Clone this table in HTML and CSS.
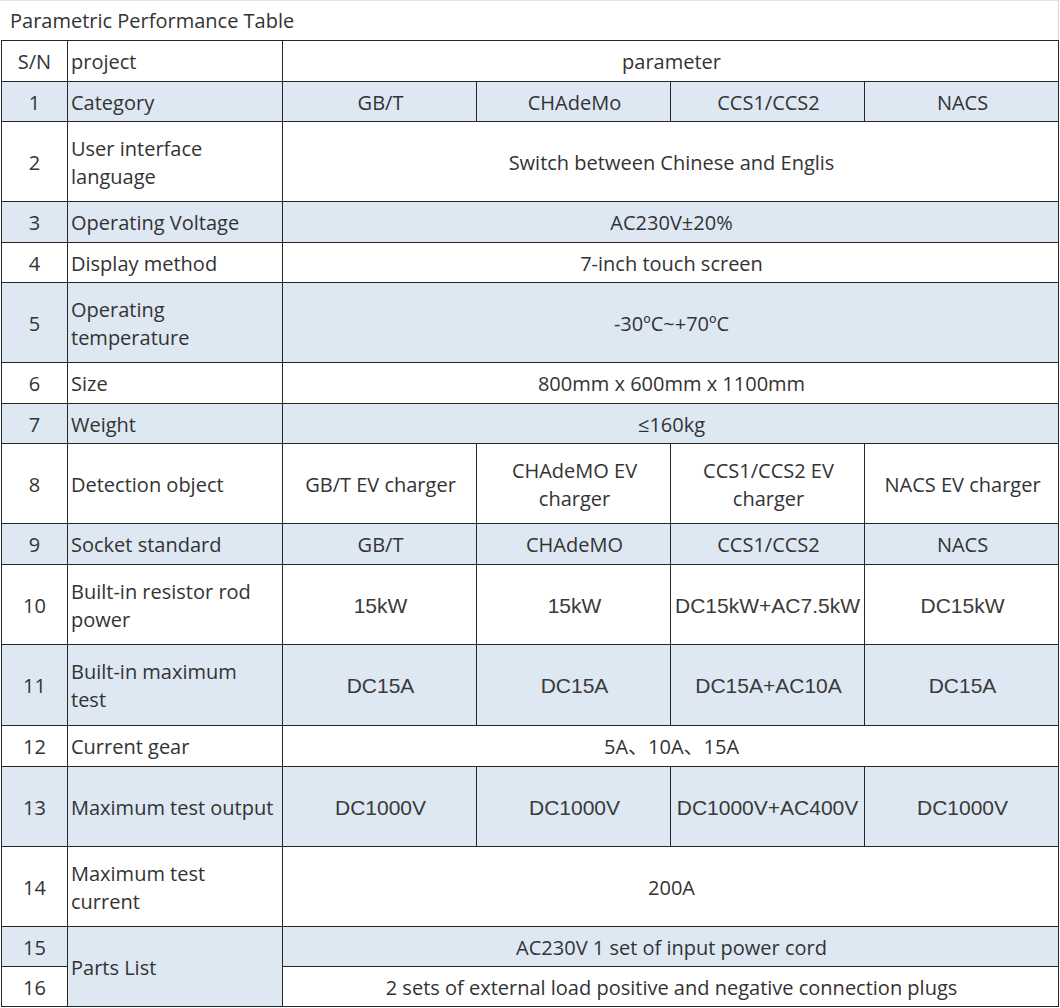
FILE: index.html
```html
<!DOCTYPE html>
<html>
<head>
<meta charset="utf-8">
<link rel="stylesheet" href="styles.css">
</head>
<body>
<div class="sheet">
  <div class="title">Parametric Performance Table</div>
  <table class="params">
    <colgroup>
      <col class="c-sn"><col class="c-proj"><col class="c-val"><col class="c-val"><col class="c-val"><col class="c-val">
    </colgroup>
    <tbody>
      <tr class="h41"><td class="sn">S/N</td><td class="proj">project</td><td colspan="4" class="val">parameter</td></tr>
      <tr class="h40 blue"><td class="sn">1</td><td class="proj">Category</td><td class="val">GB/T</td><td class="val">CHAdeMo</td><td class="val">CCS1/CCS2</td><td class="val">NACS</td></tr>
      <tr class="h80"><td class="sn">2</td><td class="proj">User interface<br>language</td><td colspan="4" class="val">Switch between Chinese and Englis</td></tr>
      <tr class="h41 blue"><td class="sn">3</td><td class="proj">Operating Voltage</td><td colspan="4" class="val">AC230V±20%</td></tr>
      <tr class="h40"><td class="sn">4</td><td class="proj">Display method</td><td colspan="4" class="val">7-inch touch screen</td></tr>
      <tr class="h80 blue"><td class="sn">5</td><td class="proj">Operating<br>temperature</td><td colspan="4" class="val">-30ºC~+70ºC</td></tr>
      <tr class="h41"><td class="sn">6</td><td class="proj">Size</td><td colspan="4" class="val">800mm x 600mm x 1100mm</td></tr>
      <tr class="h40 blue"><td class="sn">7</td><td class="proj">Weight</td><td colspan="4" class="val">≤160kg</td></tr>
      <tr class="h80"><td class="sn">8</td><td class="proj">Detection object</td><td class="val">GB/T EV charger</td><td class="val">CHAdeMO EV<br>charger</td><td class="val">CCS1/CCS2 EV<br>charger</td><td class="val">NACS EV charger</td></tr>
      <tr class="h41 blue"><td class="sn">9</td><td class="proj">Socket standard</td><td class="val">GB/T</td><td class="val">CHAdeMO</td><td class="val">CCS1/CCS2</td><td class="val">NACS</td></tr>
      <tr class="h80"><td class="sn">10</td><td class="proj">Built-in resistor rod<br>power</td><td class="val ar">15kW</td><td class="val ar">15kW</td><td class="val ar tight">DC15kW+AC7.5kW</td><td class="val ar">DC15kW</td></tr>
      <tr class="h81 blue"><td class="sn">11</td><td class="proj">Built-in maximum<br>test</td><td class="val ar">DC15A</td><td class="val ar">DC15A</td><td class="val ar">DC15A+AC10A</td><td class="val ar">DC15A</td></tr>
      <tr class="h41"><td class="sn">12</td><td class="proj">Current gear</td><td colspan="4" class="val">5A、10A、15A</td></tr>
      <tr class="h80 blue"><td class="sn">13</td><td class="proj">Maximum test output</td><td class="val ar">DC1000V</td><td class="val ar">DC1000V</td><td class="val ar tight">DC1000V+AC400V</td><td class="val ar">DC1000V</td></tr>
      <tr class="h80"><td class="sn">14</td><td class="proj">Maximum test<br>current</td><td colspan="4" class="val">200A</td></tr>
      <tr class="h40 blue"><td class="sn">15</td><td rowspan="2" class="proj blue-cell">Parts List</td><td colspan="4" class="val">AC230V 1 set of input power cord</td></tr>
      <tr class="h40"><td class="sn">16</td><td colspan="4" class="val">2 sets of external load positive and negative connection plugs</td></tr>
    </tbody>
  </table>
</div>
</body>
</html>
```

FILE: styles.css
```css
html, body {
  margin: 0;
  padding: 0;
  background: #ffffff;
}

.sheet {
  width: 1060px;
  font-family: "Open Sans", "Noto Sans CJK SC", sans-serif;
  color: #333333;
}

.title {
  box-sizing: border-box;
  height: 40px;
  width: 1059px;
  padding-left: 10px;
  border-top: 1px solid #e4e4e4;
  border-right: 1px solid #d8d8d8;
  font-size: 20px;
  line-height: 40px;
}

.params {
  border-collapse: collapse;
  table-layout: fixed;
  width: 1058px;
  margin-left: 1px;
  font-size: 20px;
}

.c-sn { width: 66px; }
.c-proj { width: 215px; }
.c-val { width: 194px; }

.params td {
  border: 1px solid #262626;
  padding: 2px 1px 0 3px;
  line-height: 28px;
  vertical-align: middle;
  white-space: nowrap;
  overflow: hidden;
}

.params td.sn { text-align: center; padding: 2px 0 0 0; }
.params td.proj { text-align: left; }
.params td.val { text-align: center; }
.params td.ar {
  font-family: "Liberation Sans", Arial, sans-serif;
  font-size: 21px;
  color: #3a3a3a;
}
.params td.tight { padding: 2px 0 0 0; }

.h40 { height: 40px; }
.h41 { height: 41px; }
.h80 { height: 80px; }
.h81 { height: 81px; }

.blue td { background: #dde8f3; }
.params td.blue-cell { background: #dde8f3; }
.h40:not(.blue) td.sn, .h40:not(.blue) td.val { background: #fff; }
```
